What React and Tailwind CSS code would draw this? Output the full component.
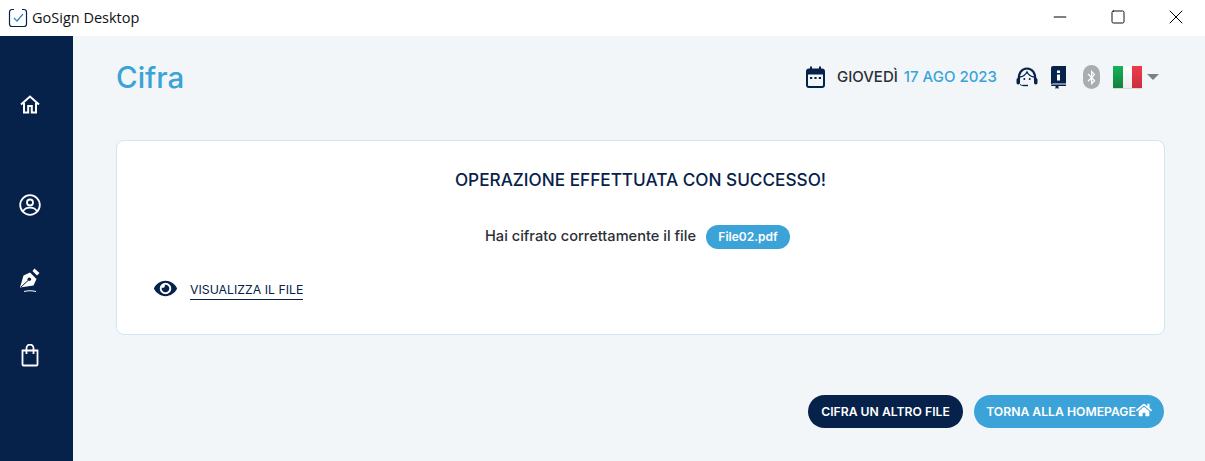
import React from 'react';
import { Minus, Square, X } from 'lucide-react';
import { FaHome, FaEye, FaBluetoothB } from 'react-icons/fa';

const FONT = "font-['Inter','Liberation_Sans',sans-serif]";

function AppLogo() {
  return (
    <svg width="20" height="20" viewBox="0 0 20 20" fill="none">
      <path d="M6 1.500H4A2.500 2.500 0 0 0 1.500 4v12A2.500 2.500 0 0 0 4 18.500h12a2.500 2.500 0 0 0 2.500-2.500V4A2.500 2.500 0 0 0 16 1.500h-2" stroke="#06214a" strokeWidth="1.200" />
      <path d="M6 10l3 3 6-7" stroke="#2f86b8" strokeWidth="1.200" />
    </svg>
  );
}

function HomeIcon() {
  return (
    <svg width="20" height="19" viewBox="0 0 20 19" fill="none" stroke="#fff" strokeWidth="2">
      <path d="M1 9.500 10 1.500l9 8" />
      <path d="M4 8v9.500h4.200V11h3.600v6.500H16V8" />
    </svg>
  );
}

function UserIcon() {
  return (
    <svg width="22" height="22" viewBox="0 0 22 22" fill="none" stroke="#fff" strokeWidth="1.800">
      <circle cx="11" cy="11" r="9.800" />
      <circle cx="11" cy="8.500" r="3" />
      <path d="M4 17.500c1.500-3 4-3.800 7-3.800s5.500.8 7 3.800" />
    </svg>
  );
}

function PenIcon() {
  return (
    <svg width="22" height="25" viewBox="0 0 22 25" fill="none">
      <path d="M1 19.500 4.500 7.500l6.500-3 6.500 6.500-3 6.500Z" fill="#fff" />
      <path d="M13.500 3 15.500.5 20.500 5 18 7.500Z" fill="#fff" />
      <circle cx="10.300" cy="11.300" r="1.800" fill="#06214a" />
      <path d="M2 19 9 12.500" stroke="#06214a" strokeWidth="1" />
      <path d="M5 23.500c4-1 8-1 12 0" stroke="#fff" strokeWidth="1" />
    </svg>
  );
}

function BagIcon() {
  return (
    <svg width="18" height="23" viewBox="0 0 18 23" fill="none" stroke="#fff" strokeWidth="1.800">
      <path d="M1.500 6.500h15v14a1 1 0 0 1-1 1h-13a1 1 0 0 1-1-1Z" />
      <path d="M5.500 10V4a3.500 3.500 0 0 1 7 0v6" />
    </svg>
  );
}

function CalendarIcon() {
  return (
    <svg width="19" height="22" viewBox="0 0 19 22" fill="none">
      <rect x="1" y="3.500" width="17" height="17.500" rx="2" stroke="#06214a" strokeWidth="2" />
      <rect x="1" y="3.500" width="17" height="5" fill="#06214a" />
      <rect x="4" y="0.500" width="2" height="4" fill="#06214a" />
      <rect x="13" y="0.500" width="2" height="4" fill="#06214a" />
      <rect x="4" y="11" width="2.200" height="2" fill="#06214a" />
      <rect x="8.400" y="11" width="2.200" height="2" fill="#06214a" />
      <rect x="12.800" y="11" width="2.200" height="2" fill="#06214a" />
    </svg>
  );
}

function SupportIcon() {
  return (
    <svg width="22" height="21" viewBox="0 0 22 21" fill="none">
      <path d="M3 13C2 6 6 1.500 11 1.500S20 6 19 13" stroke="#06214a" strokeWidth="2.200" />
      <path d="M4 10c3-.3 5.500-2.300 7-5 1.500 2.700 4 4.700 7 5" stroke="#06214a" strokeWidth="1.400" />
      <circle cx="8.300" cy="12" r="1" fill="#06214a" />
      <circle cx="13.700" cy="12" r="1" fill="#06214a" />
      <path d="M7 18.500h5" stroke="#06214a" strokeWidth="1.400" />
      <path d="M4 17.500c1 .8 2 1 3.500 1" stroke="#06214a" strokeWidth="1" />
      <rect x="0.500" y="11" width="3.500" height="6.500" rx="1.700" fill="#06214a" />
      <rect x="18" y="11" width="3.500" height="6.500" rx="1.700" fill="#06214a" />
    </svg>
  );
}

function ManualIcon() {
  return (
    <svg width="15" height="23" viewBox="0 0 15 23">
      <path d="M0 2a2 2 0 0 1 2-2h13v17.500H2a2 2 0 0 0-2 1.500Z" fill="#06214a" />
      <path d="M0 20a1.500 1.500 0 0 1 1.500-1.500H15V20H7.500v3l-1.500-1-1.500 1v-3H2Z" fill="#06214a" />
      <rect x="6" y="4.500" width="3" height="2.500" fill="#fff" />
      <rect x="6" y="8.500" width="3" height="6" fill="#fff" />
    </svg>
  );
}

function Flag() {
  return (
    <div className="flex h-[23px] w-[29px] border-b border-[#d9d9d9]">
      <div className="flex-1 bg-gradient-to-b from-[#16b35a] to-[#15803d]" />
      <div className="flex-1 bg-gradient-to-b from-white to-[#eeeeee]" />
      <div className="flex-1 bg-gradient-to-b from-[#ee3c4b] to-[#c9303f]" />
    </div>
  );
}

export default function App() {
  return (
    <div className={`flex h-[461px] w-[1205px] flex-col overflow-hidden bg-white ${FONT}`}>
      {/* Title bar */}
      <header className="flex h-9 flex-shrink-0 items-center justify-between bg-white">
        <div className="flex items-center gap-[4px] pl-2">
          <AppLogo />
          <span className="font-['Open_Sans',sans-serif] text-[14.500px] text-[#111]">GoSign Desktop</span>
        </div>
        <div className="flex items-center pb-[2px] text-black">
          <button className="flex h-[34px] w-[58px] items-center justify-center"><Minus size={20} strokeWidth={1.200} /></button>
          <button className="flex h-[34px] w-[58px] items-center justify-center"><Square size={16} strokeWidth={1.400} /></button>
          <button className="flex h-[34px] w-[58px] items-center justify-center"><X size={24} strokeWidth={1} /></button>
        </div>
      </header>

      <div className="flex min-h-0 flex-1">
        {/* Sidebar */}
        <aside className="flex w-[73px] flex-shrink-0 flex-col items-center bg-[#06214a] pr-[14px] pt-[59px]">
          <HomeIcon />
          <div className="mt-[80px]"><UserIcon /></div>
          <div className="mt-[52px]"><PenIcon /></div>
          <div className="mt-[51px]"><BagIcon /></div>
        </aside>

        {/* Main */}
        <main className="flex min-w-0 flex-1 flex-col bg-[#f2f6f9] pl-[43px] pr-10">
          <div className="flex h-[104px] items-start justify-between">
            <h1 className="mt-[22px] text-[29.500px] font-medium leading-[38px] text-[#3ba3d8]">Cifra</h1>
            <div className="mr-[6px] mt-[29px] flex h-6 items-center">
              <CalendarIcon />
              <span className="ml-3 text-[15px] font-medium text-[#2b2f36]">GIOVEDÌ</span>
              <span className="ml-[6px] text-[15px] font-medium text-[#3ba3d8]">17 AGO 2023</span>
              <div className="ml-[19px] flex"><SupportIcon /></div>
              <div className="ml-[13px] flex"><ManualIcon /></div>
              <div className="ml-[17px] flex h-[24px] w-[17px] items-center justify-center rounded-full bg-[#a9adb2] text-white">
                <FaBluetoothB size={15} />
              </div>
              <div className="ml-[13px]"><Flag /></div>
              <div className="ml-[5px] h-0 w-0 border-x-[6.500px] border-t-[6px] border-x-transparent border-t-[#7d7f83]" />
            </div>
          </div>

          {/* Result card */}
          <section className="flex h-[195px] flex-col rounded-lg border border-[#cfe6f3] bg-white">
            <h2 className="mt-[29px] text-center text-[17.200px] font-medium leading-5 text-[#06214a]">OPERAZIONE EFFETTUATA CON SUCCESSO!</h2>
            <div className="mr-[6px] mt-[35px] flex items-center justify-center gap-[10px]">
              <span className="text-[14.600px] font-medium text-[#2b2f36]">Hai cifrato correttamente il file</span>
              <span className="flex h-6 w-[84px] items-center justify-center rounded-full bg-[#3ba3d8] text-[12px] font-semibold text-white">File02.pdf</span>
            </div>
            <div className="ml-[37px] mt-[28px] flex items-start gap-[13px]">
              <FaEye size={23} className="text-[#06214a]" />
              <span className="mt-[4px] border-b border-[#06214a] text-[12.300px] font-normal leading-[18px] text-[#06214a]">VISUALIZZA IL FILE</span>
            </div>
          </section>

          {/* Actions */}
          <div className="mt-[60px] flex justify-end gap-[11px] pr-px">
            <button className="flex h-[33px] w-[155px] items-center justify-center rounded-full bg-[#06214a] pt-px text-[12.200px] font-semibold text-white">CIFRA UN ALTRO FILE</button>
            <button className="flex h-[33px] w-[190px] items-center justify-center rounded-full bg-[#3ba3d8] pt-px text-[12.200px] font-semibold text-white">
              TORNA ALLA HOMEPAGE<FaHome size={16} className="-mt-[4px]" />
            </button>
          </div>
        </main>
      </div>
    </div>
  );
}
